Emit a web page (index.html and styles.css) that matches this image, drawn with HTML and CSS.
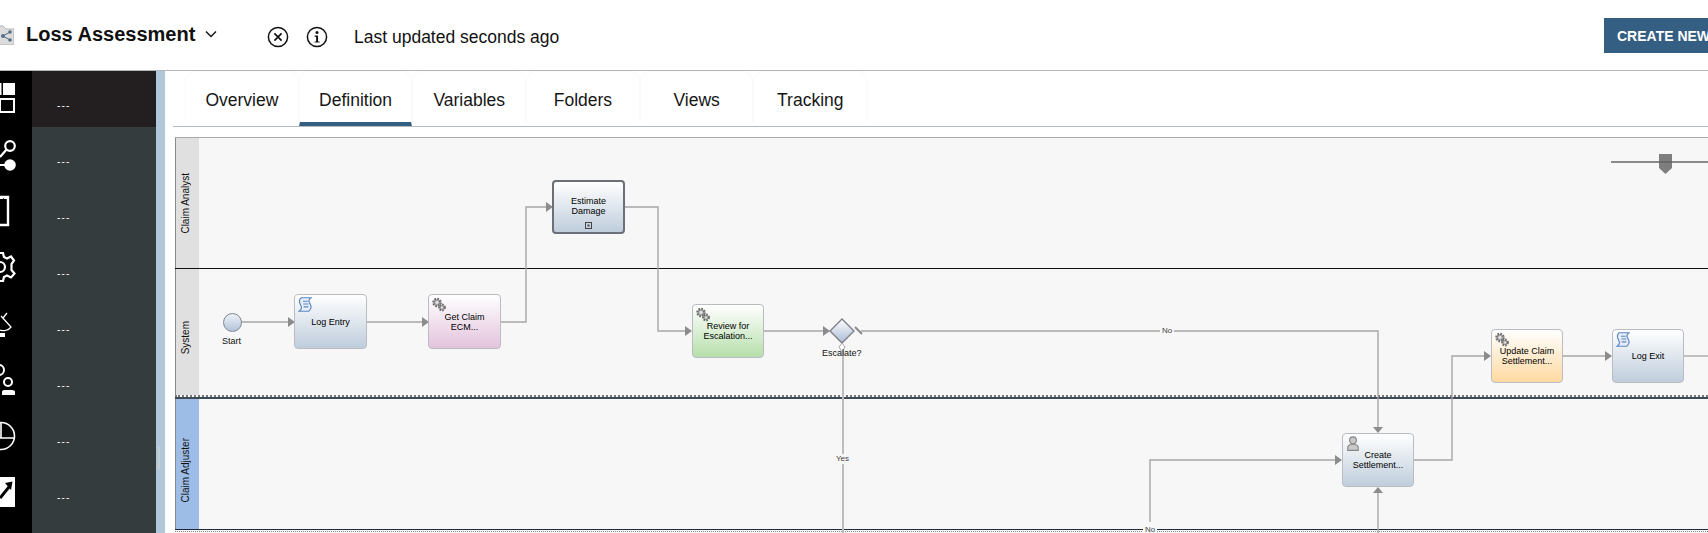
FILE: index.html
```html
<!DOCTYPE html>
<html lang="en">
<head>
  <meta charset="UTF-8" />
  <title>Loss Assessment</title>
  <link rel="stylesheet" href="styles.css">
</head>
<body>

  <svg class="defs" width="0" height="0">
    <defs>
      <linearGradient id="gw-fill" x1="0" y1="0" x2="0" y2="1">
        <stop offset="0" stop-color="#ffffff"/>
        <stop offset="1" stop-color="#a9bad6"/>
      </linearGradient>
      <symbol id="ic-script" viewBox="0 0 13 14">
        <path d="M3 .7H12.2C10.4 2 9.6 3.2 10.4 4.6L11.8 7.6C12.6 9.6 11.6 12 10 13.3H1C2.6 12.2 3.6 10.6 3 9L1.6 5.6C.9 3.6 1.4 1.8 3 .7Z" fill="#e6edf7" stroke="#5b86c4" stroke-width="1.1"/>
        <path d="M4.6 4H9M5 6.6H9.6M5.2 9.2H9.6" fill="none" stroke="#5b86c4" stroke-width="1"/>
      </symbol>
      <symbol id="ic-gears" viewBox="0 0 14 14">
        <circle cx="5" cy="5" r="3.6" fill="#a9a9a9" stroke="#6e6e6e" stroke-width="2.4" stroke-dasharray="1.6 1.2"/>
        <circle cx="5" cy="5" r="1.4" fill="#e8e8e8"/>
        <circle cx="10" cy="10" r="2.8" fill="#a9a9a9" stroke="#6e6e6e" stroke-width="2.2" stroke-dasharray="1.5 1.1"/>
        <circle cx="10" cy="10" r="1.1" fill="#e8e8e8"/>
      </symbol>
      <symbol id="ic-person" viewBox="0 0 11 14">
        <circle cx="5.5" cy="4" r="3.2" fill="#c9c9c9" stroke="#858585"/>
        <path d="M.6 13.4V10.6C.6 8.8 2.4 8 3.8 7.6H7.2C8.6 8 10.4 8.8 10.4 10.6V13.4Z" fill="#c9c9c9" stroke="#858585"/>
      </symbol>
    </defs>
  </svg>

  <header class="topbar">
    <div class="topbar-left">
      <svg class="app-icon" width="14" height="20" viewBox="0 0 14 20">
        <path d="M-6 1H3L6 4H14V20H-6Z" fill="#dcdcdc" stroke="#b5b5b5"/>
        <circle cx="3" cy="11" r="2" fill="#54708c"/>
        <circle cx="10" cy="7" r="1.8" fill="#54708c"/>
        <circle cx="10" cy="15" r="1.8" fill="#54708c"/>
        <path d="M3 11L10 7M3 11L10 15" stroke="#54708c"/>
      </svg>
      <h1 class="title">Loss Assessment</h1>
      <svg class="chevron" width="12" height="8" viewBox="0 0 12 8">
        <path d="M1 1.5L6 6.5L11 1.5" fill="none" stroke="#111" stroke-width="1.4"/>
      </svg>
      <svg class="status-icon" width="22" height="22" viewBox="0 0 22 22">
        <circle cx="11" cy="11" r="9.6" fill="none" stroke="#111" stroke-width="1.5"/>
        <path d="M7.4 7.4L14.6 14.6M14.6 7.4L7.4 14.6" stroke="#111" stroke-width="1.7"/>
      </svg>
      <svg class="info-icon" width="22" height="22" viewBox="0 0 22 22">
        <circle cx="11" cy="11" r="9.6" fill="none" stroke="#111" stroke-width="1.5"/>
        <circle cx="11" cy="6.4" r="1.5" fill="#111"/>
        <path d="M8.6 9.6H12V15.4H13.6V16.6H8.6V15.4H10.1V10.8H8.6Z" fill="#111"/>
      </svg>
      <span class="updated">Last updated seconds ago</span>
    </div>
    <button class="create-btn">CREATE NEW</button>
  </header>

  <div class="main">
    <nav class="rail">
      <svg class="rail-icon" viewBox="0 0 32 56">
        <rect x="3" y="12" width="12" height="12" fill="#fff"/>
        <rect x="0" y="12" width="1.5" height="12" fill="#fff"/>
        <rect x="0" y="28" width="14" height="13" fill="none" stroke="#fff" stroke-width="2"/>
      </svg>
      <svg class="rail-icon" viewBox="0 0 32 56">
        <circle cx="10" cy="19" r="4.800" fill="none" stroke="#fff" stroke-width="2.200"/>
        <circle cx="10" cy="38" r="5.800" fill="#fff"/>
        <path d="M0 30L7 22M0 38H6" stroke="#fff" stroke-width="2.200"/>
      </svg>
      <svg class="rail-icon" viewBox="0 0 32 56">
        <path d="M-2 14H8V42H-2" fill="none" stroke="#fff" stroke-width="2.400"/>
        <path d="M0 15.500H8" stroke="#fff" stroke-width="1" stroke-dasharray="3 1"/>
      </svg>
      <svg class="rail-icon" viewBox="0 0 32 56">
        <path d="M0 14H3L4 18L7 19.5L11 17.5L14 21.5L11.5 25V31L14.5 34.5L11 38.5L7 36.5L4 38L3 42H0" fill="none" stroke="#fff" stroke-width="2.200"/>
        <circle cx="0" cy="28" r="5" fill="none" stroke="#fff" stroke-width="2.200"/>
      </svg>
      <svg class="rail-icon" viewBox="0 0 32 56">
        <path d="M7 18L3 23M1 21L11 32C8 36 3 36 0 35" fill="none" stroke="#fff" stroke-width="1.300"/>
        <path d="M0 38H5V42H0Z" fill="#fff"/>
      </svg>
      <svg class="rail-icon" viewBox="0 0 32 56">
        <circle cx="-1" cy="19" r="5" fill="none" stroke="#fff" stroke-width="2"/>
        <circle cx="8" cy="31" r="4" fill="none" stroke="#fff" stroke-width="2"/>
        <path d="M2 44V41C2 39 4 39 8 39C12 39 15 39 15 41V44Z" fill="#fff"/>
      </svg>
      <svg class="rail-icon" viewBox="0 0 32 56">
        <circle cx="1" cy="29" r="13.5" fill="none" stroke="#fff" stroke-width="1.6"/>
        <path d="M1 15V31M-12 31H15" stroke="#fff" stroke-width="1.6"/>
      </svg>
      <svg class="rail-icon" viewBox="0 0 32 56">
        <rect x="-2" y="14" width="17" height="30" fill="#fff"/>
        <path d="M0 35L9 24" stroke="#000" stroke-width="3"/>
        <path d="M5 20L12.500 18.500L11 27Z" fill="#000"/>
      </svg>
    </nav>

    <aside class="panel">
      <div class="panel-row active">---</div>
      <div class="panel-row">---</div>
      <div class="panel-row">---</div>
      <div class="panel-row">---</div>
      <div class="panel-row">---</div>
      <div class="panel-row">---</div>
      <div class="panel-row">---</div>
      <div class="panel-row">---</div>
    </aside>

    <div class="strip"><span class="strip-thumb"></span></div>

    <section class="content">
      <div class="tabs">
        <div class="tab">Overview</div>
        <div class="tab active">Definition</div>
        <div class="tab">Variables</div>
        <div class="tab">Folders</div>
        <div class="tab">Views</div>
        <div class="tab">Tracking</div>
      </div>

      <div class="diagram">
        <div class="lanes">
          <div class="lane lane-analyst"><div class="lane-head"><span>Claim Analyst</span></div></div>
          <div class="lane lane-system"><div class="lane-head"><span>System</span></div></div>
          <div class="lane lane-adjuster"><div class="lane-head"><span>Claim Adjuster</span></div></div>
          <div class="lane-end"></div>
        </div>

        <!-- viewBox is in page coordinates, easier to read off the lines -->
        <svg class="wires" viewBox="175 137 1533 396">
          <g fill="none" stroke="#a6a6a6" stroke-width="1.4">
            <path d="M241 322H290"/>
            <path d="M367 322H424"/>
            <path d="M501 322H526V207H548"/>
            <path d="M625 207H658V331H688"/>
            <path d="M764 331H826"/>
            <path d="M861 331H1378V429"/>
            <path d="M843 350V533" stroke="#bdbdbd" stroke-width="2"/>
            <path d="M1150 522V460H1336"/>
            <path d="M1378 533V492"/>
            <path d="M1414 460H1452V356H1487"/>
            <path d="M1563 356H1608"/>
            <path d="M1684 356H1708"/>
          </g>
          <g fill="#8c8c8c">
            <path d="M288 317L295 322L288 327Z"/>
            <path d="M422 317L429 322L422 327Z"/>
            <path d="M546 202L553 207L546 212Z"/>
            <path d="M685 326L692 331L685 336Z"/>
            <path d="M823 326L830 331L823 336Z"/>
            <path d="M1373 427L1378 433L1383 427Z"/>
            <path d="M1373 493L1378 487L1383 493Z"/>
            <path d="M1335 455L1342 460L1335 465Z"/>
            <path d="M1484 351L1491 356L1484 361Z"/>
            <path d="M1605 351L1612 356L1605 361Z"/>
          </g>
          <polygon points="842,319 854,331 842,343 830,331" fill="url(#gw-fill)" stroke="#7b7f86" stroke-width="1.4"/>
          <path d="M855 327L862 334" stroke="#8a8a8a" stroke-width="2"/>
          <polygon points="842,343 845,347 842,352 839,347" fill="#fff" stroke="#aaa"/>
          <circle cx="433" cy="322" r="2.4" fill="#dfe3ea" stroke="#7f858d"/>
          <path d="M1611 162H1708" stroke="#8a8a8a" stroke-width="2"/>
          <path d="M1659 154H1672V168L1665.500 174L1659 168Z" fill="#5f5f5f" fill-opacity=".8"/>
        </svg>

        <div class="start-event"></div>
        <div class="node-label label-start">Start</div>
        <div class="node-label label-escalate">Escalate?</div>
        <div class="edge-label edge-no-1">No</div>
        <div class="edge-label edge-no-2">No</div>
        <div class="edge-label edge-yes">Yes</div>

        <div class="node blue sub n-estimate">Estimate<br>Damage
          <svg class="sub-mark" width="7" height="7" viewBox="0 0 7 7">
            <rect x=".5" y=".5" width="6" height="6" fill="none" stroke="#444"/>
            <rect x="2.5" y="2.500" width="2" height="2" fill="#444"/>
          </svg>
        </div>
        <div class="node blue n-log-entry"><svg class="node-icon"><use href="#ic-script"/></svg>Log Entry</div>
        <div class="node pink n-get-claim"><svg class="node-icon"><use href="#ic-gears"/></svg>Get Claim<br>ECM...</div>
        <div class="node green n-review"><svg class="node-icon"><use href="#ic-gears"/></svg>Review for<br>Escalation...</div>
        <div class="node orange n-update"><svg class="node-icon"><use href="#ic-gears"/></svg>Update Claim<br>Settlement...</div>
        <div class="node blue n-log-exit"><svg class="node-icon"><use href="#ic-script"/></svg>Log Exit</div>
        <div class="node blue n-create"><svg class="node-icon"><use href="#ic-person"/></svg>Create<br>Settlement...</div>
      </div>
    </section>
  </div>

</body>
</html>
```

FILE: styles.css
```css
html, body {
  margin: 0;
  height: 533px;
  overflow: hidden;
  background: #fff;
  font-family: "Liberation Sans", Arial, sans-serif;
  color: #111;
}
.defs {
  position: absolute;
}

/* top bar */
.topbar {
  display: flex;
  height: 70px;
  border-bottom: 1px solid #b3b7ba;
  overflow: hidden;
}
.topbar-left {
  flex: 0 0 1604px;
  display: flex;
  align-items: center;
}
.app-icon {
  margin-top: 0;
}
.title {
  margin: -2px 0 0 12px;
  font-size: 20px;
  font-weight: bold;
  width: 172px;
  white-space: nowrap;
}
.chevron {
  margin: -2px 0 0 7px;
}
.status-icon {
  margin: 3px 0 0 50px;
}
.info-icon {
  margin: 3px 0 0 17px;
}
.updated {
  margin: 5px 0 0 26px;
  font-size: 17.500px;
}
.create-btn {
  flex: 0 0 auto;
  align-self: flex-start;
  margin-top: 18px;
  height: 35px;
  width: 130px;
  padding: 0 0 0 13px;
  text-align: left;
  background: #345e82;
  color: #fff;
  border: none;
  font-family: inherit;
  font-size: 14px;
  font-weight: bold;
  white-space: nowrap;
}

.main {
  display: flex;
  height: 462px;
}

/* left rail, the icons are cut off by the window edge */
.rail {
  flex: 0 0 32px;
  background: #000;
  display: flex;
  flex-direction: column;
}
.rail-icon {
  display: block;
  width: 32px;
  height: 56px;
  flex: none;
}
.panel {
  flex: 0 0 124px;
  background: #343c3e;
}
.panel-row {
  height: 56px;
  line-height: 70px;
  padding-left: 25px;
  box-sizing: border-box;
  color: #fff;
  font-size: 10px;
  letter-spacing: 1.200px;
  overflow: hidden;
}
.panel-row.active {
  background: #231f20;
}
.strip {
  flex: 0 0 9px;
  background: #b0c8da;
  position: relative;
}
.strip-thumb {
  position: absolute;
  left: 2px;
  top: 376px;
  width: 2px;
  height: 22px;
  background: #c6cfd6;
}

/* tabs */
.content {
  flex: 1;
  min-width: 0;
  padding-left: 10px;
}
.tabs {
  display: flex;
  height: 55px;
  margin-left: -2px;
  padding-left: 12px;
  border-bottom: 1px solid #b4bac4;
}
.tab {
  width: 113.700px;
  height: 51px;
  box-sizing: border-box;
  padding-top: 18px;
  text-align: center;
  font-size: 17.500px;
  color: #161616;
  border: 1px solid #fafafa;
  border-bottom: none;
  border-radius: 10px 10px 0 0;
}
.tab.active {
  height: 55px;
  border-bottom: 4px solid #345e82;
  border-radius: 10px 10px 0 0;
}

/* process diagram */
.diagram {
  position: relative;
  margin-top: 10px;
  height: 396px;
  overflow: hidden;
}
.lanes {
  border-top: 1px solid #a9a9a9;
  background: #f7f7f7;
  height: 395px;
}
.lane {
  display: flex;
  box-sizing: border-box;
}
.lane-head {
  flex: 0 0 24px;
  box-sizing: border-box;
  border-left: 1px solid #8a8a8a;
  padding-right: 5px;
  background: #e0e0e0;
  display: flex;
  align-items: center;
  justify-content: center;
  font-size: 10px;
}
.lane-head span {
  writing-mode: vertical-rl;
  transform: rotate(180deg);
  white-space: nowrap;
}
.lane-analyst {
  height: 131px;
  border-bottom: 1px solid #111;
}
.lane-system {
  height: 128px;
  border-bottom: 2px dotted #777;
}
.lane-system .lane-head {
  padding-top: 12px;
}
.lane-adjuster {
  height: 133px;
  border-top: 2px solid #3f4a57;
  border-bottom: 1px solid #1c2a3c;
}
.lane-adjuster .lane-head {
  padding-top: 12px;
  background: #9dbde6;
}
.lane-end {
  margin-top: 1px;
  border-top: 1px dotted #888;
}
.wires {
  position: absolute;
  left: 0;
  top: 0;
  width: 1533px;
  height: 396px;
}

.node {
  position: absolute;
  box-sizing: border-box;
  width: 72px;
  height: 54px;
  border: 1px solid #b9bdc2;
  border-radius: 4px;
  display: flex;
  flex-direction: column;
  justify-content: center;
  text-align: center;
  font-size: 9px;
  line-height: 10px;
  color: #000;
}
.node.blue {
  background: linear-gradient(#fff, #bfcddc);
}
.node.pink {
  background: linear-gradient(#fff, #e3c3dd);
}
.node.green {
  background: linear-gradient(#fff, #b6dfab);
}
.node.orange {
  background: linear-gradient(#fff, #ffd9a0);
}
.node.sub {
  border: 2px solid #6b7078;
  width: 73px;
  padding-bottom: 2px;
}
.node-icon {
  position: absolute;
  left: 3px;
  top: 2px;
  width: 14px;
  height: 15px;
}
.sub-mark {
  position: absolute;
  left: 31px;
  bottom: 3px;
}
.n-estimate { left: 377px; top: 43px; }
.n-log-entry { left: 119px; top: 157px; width: 73px; height: 55px; }
.n-get-claim { left: 253px; top: 157px; width: 73px; height: 55px; }
.n-review { left: 517px; top: 167px; }
.n-update { left: 1316px; top: 192px; }
.n-log-exit { left: 1437px; top: 192px; }
.n-create { left: 1167px; top: 296px; }

.start-event {
  position: absolute;
  left: 48px;
  top: 176px;
  width: 19px;
  height: 19px;
  box-sizing: border-box;
  border: 1px solid #7d8895;
  border-radius: 50%;
  background: linear-gradient(#eef2f7, #b2c4da);
}
.node-label {
  position: absolute;
  font-size: 9px;
  line-height: 10px;
  white-space: nowrap;
}
.label-start { left: 47px; top: 199px; }
.label-escalate { left: 647px; top: 211px; }
.edge-label {
  position: absolute;
  font-size: 8px;
  line-height: 10px;
  padding: 0 2px;
  background: #f7f7f7;
  color: #444;
}
.edge-no-1 { left: 985px; top: 189px; }
.edge-no-2 { left: 968px; top: 388px; }
.edge-yes { left: 659px; top: 317px; }
```
